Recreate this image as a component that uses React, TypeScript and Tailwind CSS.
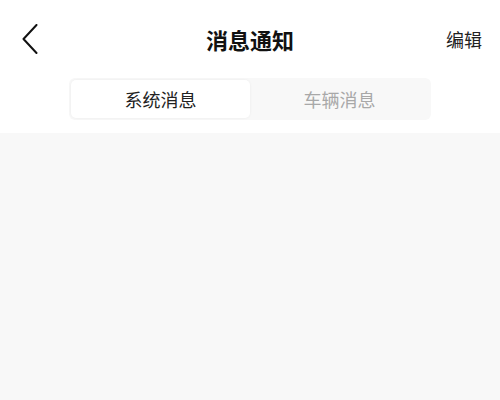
import { useState } from "react";

const tabs = ["系统消息", "车辆消息"];

export default function App() {
  const [active, setActive] = useState(0);

  return (
    <div
      className="min-h-screen w-full bg-[#f8f8f8]"
      style={{ fontFamily: '"Noto Sans CJK SC", "Noto Sans", sans-serif' }}
    >
      <div className="bg-white pb-[13px]">
        <div className="relative flex h-[78px] items-center justify-between pl-[22px] pr-[18px]">
          <button className="flex h-[30px] w-[16px] items-center justify-center">
            <svg width="16" height="30" viewBox="0 0 16 30" fill="none">
              <polyline
                points="14.5,1 1.5,15 14.5,29"
                stroke="#111"
                strokeWidth="2"
                strokeLinecap="round"
                strokeLinejoin="round"
              />
            </svg>
          </button>
          <h1 className="absolute left-1/2 -translate-x-1/2 text-[22px] font-bold leading-none text-[#111]">
            消息通知
          </h1>
          <button className="text-[18px] leading-none text-[#222]">编辑</button>
        </div>

        <div className="mx-auto flex h-[42px] w-[362px] rounded-[6px] bg-[#f8f8f8] p-[2px]">
          {tabs.map((t, i) => (
            <button
              key={t}
              onClick={() => setActive(i)}
              className={
                i === active
                  ? "flex-1 rounded-[5px] bg-white text-[18px] text-[#222] shadow-[0_0_3px_rgba(0,0,0,0.06)]"
                  : "flex-1 rounded-[5px] text-[18px] text-[#a8a8a8]"
              }
            >
              {t}
            </button>
          ))}
        </div>
      </div>
    </div>
  );
}
